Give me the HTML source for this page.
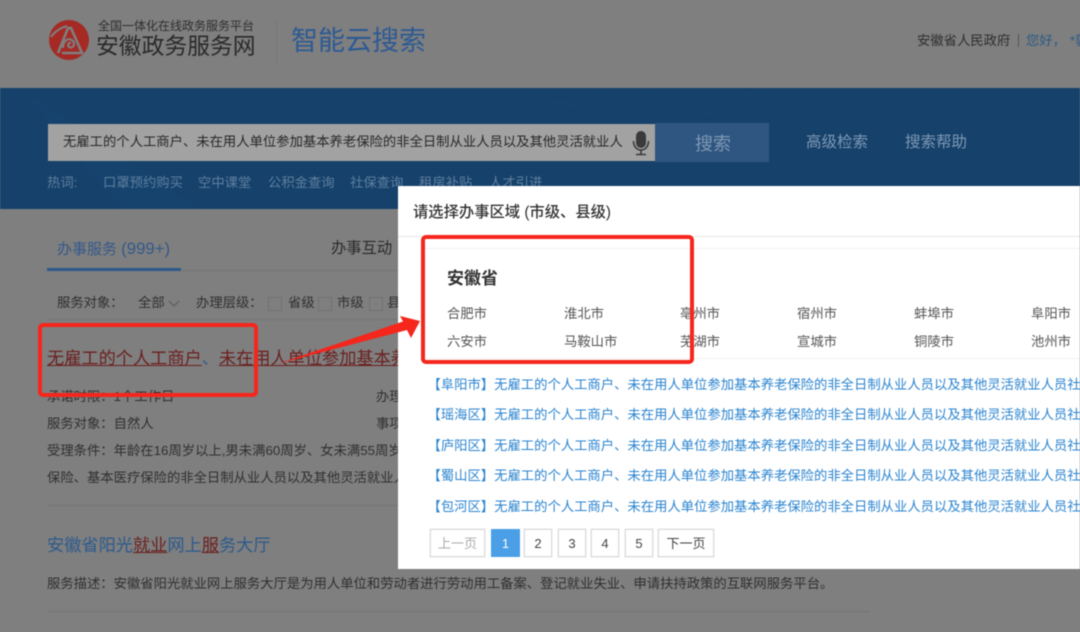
<!DOCTYPE html>
<html lang="zh-CN">
<head>
<meta charset="utf-8">
<title>智能云搜索</title>
<style>
html,body{margin:0;padding:0;width:1080px;height:632px;overflow:hidden;background:#7f7f7f}
body{position:relative;font-family:"Liberation Sans","Noto Sans CJK SC",sans-serif;color:#262626}
div{position:absolute;white-space:nowrap}
#w{left:0;top:0;width:1080px;height:632px;overflow:hidden;filter:blur(.4px)}
.t{line-height:20px;height:20px}
.s13{font-size:13.33px}
.g{color:#303030}
.m{color:#282828}
.hot{color:#5f7f9e;font-size:13.33px;top:173px;line-height:20px}
.cb{width:12px;height:12px;border:1px solid #727272;top:297px}
.hl{color:#6b1f1f;text-decoration:underline}
.city{font-size:13.33px;color:#555;line-height:20px}
.li{left:427.5px;font-size:13.33px;color:#2b84d0;line-height:20px}
.pg{top:529px;height:26px;line-height:27px;border:1px solid #dcdcdc;box-shadow:0 0 0 .5px #e6e6e6;text-align:center;font-size:13px;color:#444;background:#fff}
.line{height:1px;background:#747474}
</style>
</head>
<body>
<div id="w">
<!-- header -->
<svg style="position:absolute;left:49px;top:20px" width="40" height="40" viewBox="0 0 40 40">
<circle cx="20" cy="20" r="20" fill="#a52a24"/>
<path d="M9 33 L19 8 L22 8 L33 33 L13 33" fill="none" stroke="#7f7f7f" stroke-width="2.6"/>
<path d="M2 17 C6 11 11 8 18 6" fill="none" stroke="#7f7f7f" stroke-width="2"/>
<path d="M14 28 C14 20 20 17 24 21 C27 25 23 29 20 27 C18 25 20 22 22 23" fill="none" stroke="#7f7f7f" stroke-width="2.2"/>
</svg>
<div class="t" style="left:98px;top:16px;font-size:12px;color:#2f2f2f">全国一体化在线政务服务平台</div>
<div style="left:96px;top:30px;font-size:22.8px;line-height:32px;color:#2a2a2a">安徽政务服务网</div>
<div style="left:276px;top:20px;width:1px;height:44px;background:#787878"></div>
<div style="left:291px;top:21px;font-size:27px;line-height:40px;color:#2c5a94">智能云搜索</div>
<div class="t s13" style="left:917px;top:31px;color:#2f2f2f">安徽省人民政府</div>
<div style="left:1018px;top:34px;width:1px;height:13px;background:#555"></div>
<div class="t s13" style="left:1026px;top:31px;color:#2c5a84">您好，</div>
<div class="t s13" style="left:1070px;top:31px;color:#2c5a84">*郭</div>

<!-- blue band -->
<div style="left:0;top:88px;width:1080px;height:121px;background:#15416b;overflow:hidden">
<svg width="1080" height="121" style="position:absolute;left:0;top:0">
<polygon points="20,0 200,121 120,121" fill="#16436e"/>
<polyline points="540,0 555,14 575,18 600,0" fill="none" stroke="#184670" stroke-width="1"/>
<polyline points="640,0 695,32 760,0" fill="none" stroke="#184670" stroke-width="1"/>
<polyline points="825,0 888,30 950,0" fill="none" stroke="#184670" stroke-width="1"/>
<polyline points="940,16 1030,56 1080,28" fill="none" stroke="#17446d" stroke-width="1"/>
</svg>
</div>
<div style="left:48px;top:124px;width:607px;height:37px;background:#a2a2a2"></div>
<div class="s13 m" style="left:63px;top:132px;line-height:20px;width:560px;overflow:hidden">无雇工的个人工商户、未在用人单位参加基本养老保险的非全日制从业人员以及其他灵活就业人</div>
<svg style="position:absolute;left:631px;top:130px" width="20" height="26" viewBox="0 0 20 26">
<rect x="5" y="1" width="10" height="17" rx="5" fill="#3a3a3a"/>
<path d="M2.5 11 C2.5 23 17.5 23 17.5 11" fill="none" stroke="#3a3a3a" stroke-width="1.6"/>
<path d="M10 20 V24 M5 24.5 H15" stroke="#3a3a3a" stroke-width="1.6" fill="none"/>
</svg>
<div style="left:655px;top:123px;width:114px;height:39px;background:#2e5681"></div>
<div style="left:695px;top:132px;font-size:18px;line-height:24px;color:#7f98b3">搜索</div>
<div style="left:806px;top:132px;font-size:15.5px;line-height:22px;color:#7f98b3">高级检索</div>
<div style="left:905px;top:132px;font-size:15.5px;line-height:22px;color:#7f98b3">搜索帮助</div>
<div class="hot" style="left:47px">热词:</div>
<div class="hot" style="left:103px">口罩预约购买</div>
<div class="hot" style="left:198px">空中课堂</div>
<div class="hot" style="left:268px">公积金查询</div>
<div class="hot" style="left:350px">社保查询</div>
<div class="hot" style="left:419px">租房补贴</div>
<div class="hot" style="left:489px">人才引进</div>

<!-- tabs -->
<div style="left:57px;top:238px;font-size:15px;line-height:22px;color:#34598a">办事服务 <span style="font-size:16.8px">(999+)</span></div>
<div style="left:331px;top:238px;font-size:15.3px;line-height:22px;color:#2a2a2a">办事互动</div>
<div class="line" style="left:47px;top:270px;width:351px"></div>
<div style="left:47px;top:268px;width:134px;height:3px;background:#2d5a8c"></div>

<!-- filters -->
<div class="t s13 g" style="left:57px;top:293px">服务对象：</div>
<div class="t s13 g" style="left:138px;top:293px">全部</div>
<svg style="position:absolute;left:168px;top:300px" width="12" height="7"><path d="M1 1 L6 6 L11 1" fill="none" stroke="#5a5a5a" stroke-width="1"/></svg>
<div class="t s13 g" style="left:196px;top:293px">办理层级：</div>
<div class="cb" style="left:268px"></div>
<div class="t s13 g" style="left:288px;top:293px">省级</div>
<div class="cb" style="left:318px"></div>
<div class="t s13 g" style="left:337px;top:293px">市级</div>
<div class="cb" style="left:369px"></div>
<div class="t s13 g" style="left:387px;top:293px">县</div>
<div class="line" style="left:47px;top:319px;width:351px"></div>

<!-- result 1 -->
<div style="left:47px;top:346px;font-size:17.2px;line-height:24px;width:351px;overflow:hidden"><span class="hl">无雇工的个人工商户</span><span style="color:#2c5a8c">、</span><span class="hl">未在用人单位参加基本养老</span></div>
<div class="t s13 g" style="left:47px;top:387px">承诺时限：1个工作日</div>
<div class="t s13 g" style="left:376px;top:387px">办理</div>
<div class="t s13 g" style="left:47px;top:414px">服务对象：自然人</div>
<div class="t s13 g" style="left:376px;top:414px">事项</div>
<div class="t s13 g" style="left:47px;top:441px;width:351px;overflow:hidden">受理条件：年龄在16周岁以上,男未满60周岁、女未满55周岁</div>
<div class="t s13 g" style="left:47px;top:468px;width:351px;overflow:hidden">保险、基本医疗保险的非全日制从业人员以及其他灵活就业人员</div>
<div class="line" style="left:47px;top:505px;width:351px"></div>

<!-- result 2 -->
<div style="left:47px;top:533px;font-size:17.2px;line-height:24px;color:#2c5a8c">安徽省阳光<span class="hl">就业</span>网上<span class="hl">服</span>务大厅</div>
<div class="t s13 g" style="left:47px;top:574px">服务描述：安徽省阳光就业网上服务大厅是为用人单位和劳动者进行劳动用工备案、登记就业失业、申请扶持政策的互联网服务平台。</div>
<div class="line" style="left:47px;top:611px;width:823px"></div>

<!-- modal -->
<div style="left:398px;top:186px;width:682px;height:383px;background:#fff;overflow:hidden"></div>
<div style="left:413px;top:202px;font-size:15.3px;line-height:22px;color:#333;font-weight:500">请选择办事区域 (市级、县级)</div>
<div style="left:398px;top:236px;width:682px;height:1px;background:#e6e6e6"></div>
<div style="left:422px;top:248px;width:658px;height:111px;border-top:1px solid #f2f2f2;border-bottom:1px solid #f2f2f2;border-left:1px solid #f2f2f2;box-sizing:border-box"></div>
<div style="left:447px;top:268px;font-size:17px;line-height:22px;font-weight:700;color:#333">安徽省</div>
<div class="city" style="left:447px;top:304px">合肥市</div>
<div class="city" style="left:564px;top:304px">淮北市</div>
<div class="city" style="left:680px;top:304px">亳州市</div>
<div class="city" style="left:797px;top:304px">宿州市</div>
<div class="city" style="left:914px;top:304px">蚌埠市</div>
<div class="city" style="left:1031px;top:304px">阜阳市</div>
<div class="city" style="left:447px;top:332px">六安市</div>
<div class="city" style="left:564px;top:332px">马鞍山市</div>
<div class="city" style="left:680px;top:332px">芜湖市</div>
<div class="city" style="left:797px;top:332px">宣城市</div>
<div class="city" style="left:914px;top:332px">铜陵市</div>
<div class="city" style="left:1031px;top:332px">池州市</div>

<div class="li" style="top:375px">【阜阳市】无雇工的个人工商户、未在用人单位参加基本养老保险的非全日制从业人员以及其他灵活就业人员社会保险</div>
<div class="li" style="top:405px">【瑶海区】无雇工的个人工商户、未在用人单位参加基本养老保险的非全日制从业人员以及其他灵活就业人员社会保险</div>
<div class="li" style="top:436px">【庐阳区】无雇工的个人工商户、未在用人单位参加基本养老保险的非全日制从业人员以及其他灵活就业人员社会保险</div>
<div class="li" style="top:466px">【蜀山区】无雇工的个人工商户、未在用人单位参加基本养老保险的非全日制从业人员以及其他灵活就业人员社会保险</div>
<div class="li" style="top:497px">【包河区】无雇工的个人工商户、未在用人单位参加基本养老保险的非全日制从业人员以及其他灵活就业人员社会保险</div>

<div class="pg" style="left:430px;width:53px;color:#aaa">上一页</div>
<div class="pg" style="left:491px;width:27px;background:#4a9fe6;border-color:#4a9fe6;box-shadow:none;color:#fff">1</div>
<div class="pg" style="left:524px;width:26px">2</div>
<div class="pg" style="left:558px;width:26px">3</div>
<div class="pg" style="left:591px;width:26px">4</div>
<div class="pg" style="left:625px;width:26px">5</div>
<div class="pg" style="left:658px;width:54px">下一页</div>

<!-- annotations -->
<div style="left:38px;top:323px;width:220px;height:74px;border:4px solid #f5261c;border-radius:5px;box-sizing:border-box"></div>
<div style="left:421px;top:235px;width:273px;height:129px;border:4px solid #f5261c;border-radius:5px;box-sizing:border-box"></div>
<svg style="position:absolute;left:0;top:0" width="1080" height="632" viewBox="0 0 1080 632">
<polygon points="277,364 403,321.500 400,316 420,321 411,338 407,330" fill="#f5261c"/>
</svg>
</div>
</body>
</html>
